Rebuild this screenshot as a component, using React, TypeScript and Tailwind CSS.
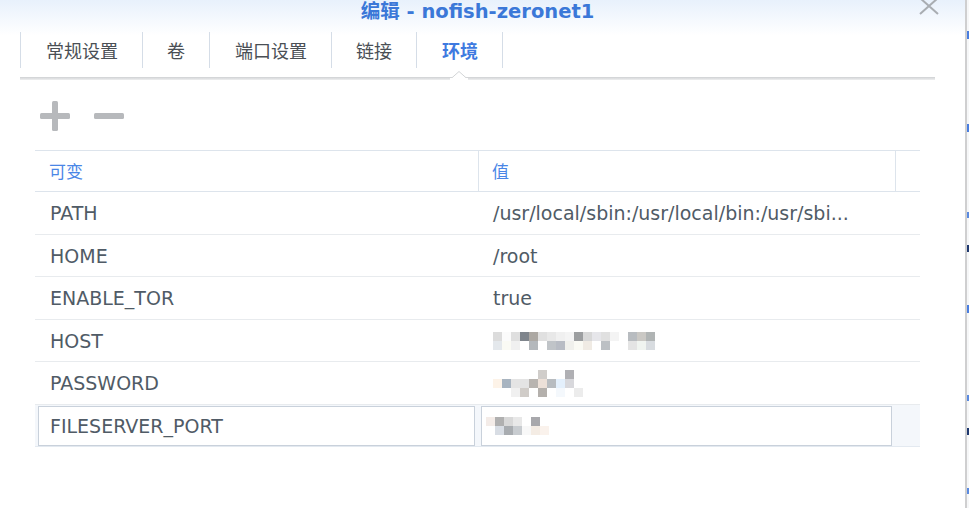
import React from "react";

const latin = { fontFamily: '"DejaVu Sans", "Noto Sans CJK SC", sans-serif' };
const cjk = { fontFamily: '"Noto Sans CJK SC", "DejaVu Sans", sans-serif' };

type PixRow = { offset: number; colors: string[] };

function Pixels({ rows }: { rows: PixRow[] }) {
  return (
    <div className="flex flex-col">
      {rows.map((r, i) => (
        <div key={i} className="flex h-[9px]">
          <div style={{ width: r.offset }} />
          {r.colors.map((c, j) => (
            <div key={j} className="w-[9px] h-[9px]" style={{ backgroundColor: c }} />
          ))}
        </div>
      ))}
    </div>
  );
}

const hostPix: PixRow[] = [
  {
    offset: 0,
    colors: ["#dcdcdc", "#fbfbfb", "#dfdfdf", "#7f858c", "#aca8a3", "#e0e0e0", "#e8e8e8", "#f0f0f0", "#f4f4f4", "#9c9ea0", "#d8d8d8", "#e6e6ea", "#e0e0e0", "#f4f4f4", "#ffffff", "#b8bcc0", "#cac8c4", "#b0b4b4"],
  },
  {
    offset: 0,
    colors: ["#e4e8ec", "#fafaf4", "#f0f0f0", "#ffffff", "#b4b8bc", "#ffffff", "#c0c4c8", "#b8bcc4", "#f0f0ec", "#fafaf4", "#f0ebe4", "#ffffff", "#bcc0c4", "#ffffff", "#ffffff", "#e4e4e4", "#f0f4f0", "#d8dce0"],
  },
];

const passPix: PixRow[] = [
  { offset: 45, colors: ["#d0cdca", "#ffffff", "#ffffff", "#b0b0b4"] },
  { offset: 0, colors: ["#fdf3e8", "#a8b4c0", "#e4e4e4", "#e4e4e4", "#b8b4b0", "#ece0d8", "#b8bcc0", "#e4f0fc", "#d8d8dc"] },
  { offset: 18, colors: ["#f0f0f0", "#d0ccc8", "#ffffff", "#b4b0ac", "#ffffff", "#f4f8fc", "#ffffff", "#ececec"] },
];

const portPix: PixRow[] = [
  { offset: 0, colors: ["#f4ece8", "#b0b0b0", "#d8d8d8", "#e8e8e8", "#ffffff", "#a8a8ac"] },
  { offset: 0, colors: ["#ffffff", "#d8dde4", "#a8acb0", "#c8ccd0", "#f8f8f8", "#f4ece4", "#faf2ec"] },
];

const rows: { k: string; v: React.ReactNode; h: number }[] = [
  { k: "PATH", v: "/usr/local/sbin:/usr/local/bin:/usr/sbi...", h: 43 },
  { k: "HOME", v: "/root", h: 42 },
  { k: "ENABLE_TOR", v: "true", h: 43 },
  { k: "HOST", v: <Pixels rows={hostPix} />, h: 42 },
  { k: "PASSWORD", v: <Pixels rows={passPix} />, h: 43 },
];

const tabs: { t: string; pad: string }[] = [
  { t: "常规设置", pad: "pl-[25px] pr-[24px]" },
  { t: "卷", pad: "px-[24px]" },
  { t: "端口设置", pad: "pl-[25px] pr-[24px]" },
  { t: "链接", pad: "px-[24px]" },
  { t: "环境", pad: "pl-[25px] pr-[24px]" },
];

export default function App() {
  return (
    <div className="w-[969px] h-[508px] flex overflow-hidden bg-white">
      <div className="w-[965px] h-full flex flex-col bg-gradient-to-b from-[#e8f1fc] via-white via-[7%] to-white relative">
        {/* title */}
        <div className="h-[32px] relative flex justify-center">
          <div
            className="text-[19.5px] leading-[19px] font-bold text-[#3b78d8] pr-[10px]"
            style={latin}
          >
            <span style={cjk}>编辑</span> - nofish-zeronet1
          </div>
          <svg className="absolute left-[918px] -top-[4px]" width="22" height="20" viewBox="0 0 22 20">
            <path d="M2 2 L20 18 M20 2 L2 18" stroke="#a9adb2" strokeWidth="2" fill="none" />
          </svg>
        </div>

        {/* tabs */}
        <div className="ml-[20px] w-[915px] relative">
          <div className="flex h-[36px]">
            {tabs.map((tab, i) => (
              <div
                key={tab.t}
                className={`h-full flex items-center ${tab.pad} border-l border-[#d5dde7] ${i === tabs.length - 1 ? "border-r" : ""}`}
              >
                <span
                  className={`text-[18px] leading-none ${i === tabs.length - 1 ? "text-[#3e7ae0] font-bold" : "text-[#4a4f55]"}`}
                  style={cjk}
                >
                  {tab.t}
                </span>
              </div>
            ))}
          </div>
          <div className="h-[9px]" />
          <div className="h-[3px] bg-gradient-to-b from-[#cfd1d3] to-[#eeeff0]" />
          <svg className="absolute left-[430px] top-[39px]" width="18" height="9" viewBox="0 0 18 9">
            <path d="M0 8.5 L9 0.5 L18 8.5" fill="white" stroke="#d3d5d7" strokeWidth="1" />
            <rect x="0" y="7" width="18" height="2" fill="white" />
          </svg>
        </div>

        {/* toolbar */}
        <div className="flex items-center h-[30px] mt-[21px] ml-[40px] gap-[24px]">
          <svg width="30" height="30" viewBox="0 0 30 30">
            <rect x="0" y="12" width="30" height="6" rx="1.5" fill="#b7b9bc" />
            <rect x="12" y="0" width="6" height="30" rx="1.5" fill="#b7b9bc" />
          </svg>
          <svg width="30" height="30" viewBox="0 0 30 30">
            <rect x="0" y="12" width="30" height="6" rx="1.5" fill="#b7b9bc" />
          </svg>
        </div>

        {/* table */}
        <div className="ml-[35px] w-[885px] mt-[19px] border-t border-[#dde4ec]">
          <div className="flex h-[41px] border-b border-[#dde4ec]">
            <div className="w-[444px] flex items-center pl-[14px] border-r border-[#dde4ec]">
              <span className="text-[17px] text-[#4a86e6]" style={cjk}>可变</span>
            </div>
            <div className="w-[417px] flex items-center pl-[13px] border-r border-[#dde4ec]">
              <span className="text-[17px] text-[#4a86e6]" style={cjk}>值</span>
            </div>
            <div className="flex-1" />
          </div>
          {rows.map((r) => (
            <div key={r.k} className="flex border-b border-[#e8ebee]" style={{ height: r.h }}>
              <div className="w-[444px] flex items-center pl-[15px]">
                <span className="text-[19px] leading-[22px] text-[#505b66]" style={latin}>{r.k}</span>
              </div>
              <div className="flex-1 flex items-center pl-[14px]">
                {typeof r.v === "string" ? (
                  <span className="text-[19px] leading-[22px] text-[#505b66] whitespace-nowrap" style={latin}>{r.v}</span>
                ) : (
                  r.v
                )}
              </div>
            </div>
          ))}
          <div className="flex h-[42px] bg-[#f4f7fb] border-b border-[#e3e9f0] items-center pl-[3px]">
            <div className="w-[437px] h-[40px] bg-white border border-[#c9d1db] flex items-center pl-[11px]">
              <span className="text-[19px] leading-[22px] text-[#505b66]" style={latin}>FILESERVER_PORT</span>
            </div>
            <div className="w-[6px]" />
            <div className="w-[411px] h-[40px] bg-white border border-[#c9d1db] flex items-center pl-[4px]">
              <Pixels rows={portPix} />
            </div>
          </div>
        </div>
      </div>

      {/* background page edge */}
      <div className="w-[2px] h-full bg-[#cfcfd0]" />
      <div className="w-[2px] h-full bg-[#f6f7f8] relative">
        <div className="absolute left-0 top-[31px] w-[2px] h-[8px] bg-[#4a7ee0]" />
        <div className="absolute left-0 top-[124px] w-[2px] h-[8px] bg-[#4a7ee0]" />
        <div className="absolute left-0 top-[212px] w-[2px] h-[6px] bg-[#5a8ae0]" />
        <div className="absolute left-0 top-[245px] w-[2px] h-[7px] bg-[#203a70]" />
        <div className="absolute left-0 top-[305px] w-[2px] h-[8px] bg-[#4a7ee0]" />
        <div className="absolute left-0 top-[395px] w-[2px] h-[6px] bg-[#5a8ae0]" />
        <div className="absolute left-0 top-[428px] w-[2px] h-[7px] bg-[#203a70]" />
        <div className="absolute left-0 top-[488px] w-[2px] h-[6px] bg-[#5a8ae0]" />
      </div>
    </div>
  );
}
